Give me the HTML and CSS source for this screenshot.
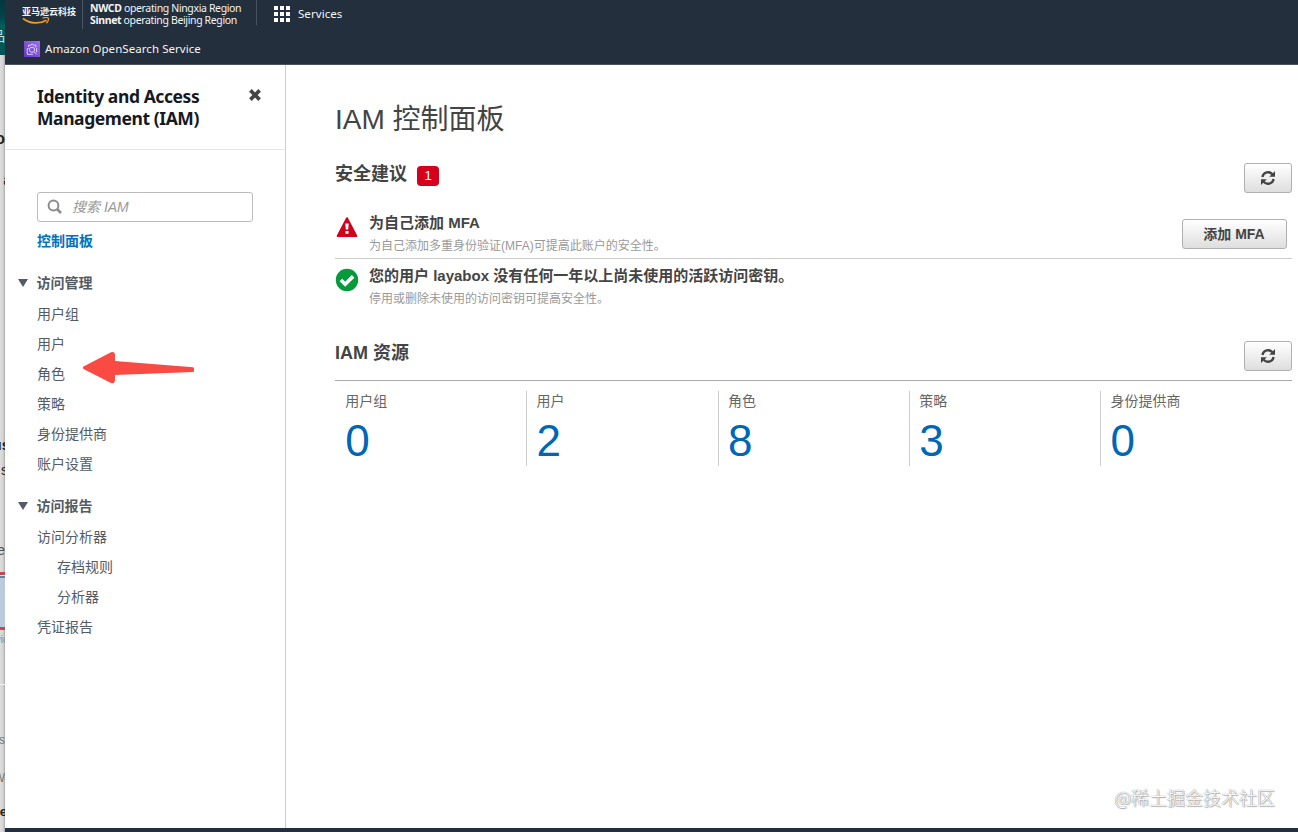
FILE: index.html
```html
<!DOCTYPE html>
<html lang="zh-CN">
<head>
<meta charset="utf-8">
<title>IAM 控制面板</title>
<link rel="stylesheet" href="styles.css">
</head>
<body>
<div class="desktop">
  <aside class="behind" aria-hidden="true">
    <span class="behind-top"></span>
    <span class="frag frag-brand">品</span>
    <span class="frag frag-o">o</span>
    <span class="frag frag-a">a</span>
    <span class="frag frag-us">us</span>
    <span class="frag frag-s">s</span>
    <span class="frag frag-e">e</span>
    <span class="behind-field"></span>
    <span class="frag frag-vic">vic</span>
    <span class="behind-line"></span>
    <span class="frag frag-s2">s</span>
    <span class="frag frag-w">W</span>
    <span class="frag frag-e2">e</span>
  </aside>
  <div class="window">
    <header class="topbar">
      <div class="topbar-row">
        <div class="brand">
          <span class="brand-name">亚马逊云科技</span>
          <svg class="smile" width="28" height="8" viewBox="0 0 28 8"><path d="M1 1.5C8 6.8 17 7.4 24.5 3.2" fill="none" stroke="#f29a1f" stroke-width="1.8"/><path d="M20.5 1.2C23 .4 25.6.4 26.2 1.2C26.8 2.1 26 4.5 24.4 6.2" fill="none" stroke="#f29a1f" stroke-width="1.3"/></svg>
        </div>
        <div class="regions"><div class="region-line nwcd"><b>NWCD</b> operating Ningxia Region</div><div class="region-line sinnet"><b>Sinnet</b> operating Beijing Region</div></div>
        <div class="services">
          <svg width="16" height="16" viewBox="0 0 16 16" fill="#fff"><path d="M0 0h4v4H0zM6 0h4v4H6zM12 0h4v4h-4zM0 6h4v4H0zM6 6h4v4H6zM12 6h4v4h-4zM0 12h4v4H0zM6 12h4v4H6zM12 12h4v4h-4z"/></svg>
          <span class="services-label">Services</span>
        </div>
      </div>
      <div class="favorites">
        <svg width="16" height="16" viewBox="0 0 16 16"><defs><linearGradient id="purple" x1="0" y1="1" x2="1" y2="0"><stop offset="0" stop-color="#6338c4"/><stop offset="1" stop-color="#a06ef2"/></linearGradient></defs><path fill="url(#purple)" d="M0 0h16v16H0z"/><g fill="none" stroke="#eadfff" stroke-width=".9"><path d="M3.2 13V7.5h1.3M4.5 6V4.2h2.2M6.4 4.2a1.8 1.3 0 0 1 3.4 0M9.5 4.2h2.3v2.2M12.6 7.2v4.1M3 13.3h6"/><circle cx="8" cy="8.7" r="2.6"/><path d="m9.9 10.6 2.5 2.6"/></g></svg>
        <span class="favorite-label">Amazon OpenSearch Service</span>
      </div>
    </header>
    <div class="body">
      <nav class="sidebar">
        <div class="side-head">
          <h2 class="side-title">Identity and Access<br>Management (IAM)</h2>
          <svg class="close" width="14" height="14" viewBox="0 0 14 14"><path d="m2.400 2.400 9.200 9.200m0-9.200-9.200 9.200" stroke="#444" stroke-width="3.700"/></svg>
        </div>
        <div class="search">
          <svg width="16" height="16" viewBox="0 0 16 16"><circle cx="6.500" cy="6.500" r="4.900" fill="none" stroke="#8c8c8c" stroke-width="2"/><path d="m10 10 4 4" stroke="#8c8c8c" stroke-width="2.500"/></svg>
          <span class="placeholder">搜索 IAM</span>
        </div>
        <a class="current">控制面板</a>
        <section class="group">
          <div class="group-title"><i class="caret"></i><span class="group-name">访问管理</span></div>
          <a class="item">用户组</a>
          <a class="item">用户</a>
          <a class="item">角色</a>
          <a class="item">策略</a>
          <a class="item">身份提供商</a>
          <a class="item">账户设置</a>
        </section>
        <section class="group">
          <div class="group-title"><i class="caret"></i><span class="group-name">访问报告</span></div>
          <a class="item">访问分析器</a>
          <a class="item sub">存档规则</a>
          <a class="item sub">分析器</a>
          <a class="item">凭证报告</a>
        </section>
      </nav>
      <main class="main">
        <h1 class="page-title">IAM 控制面板</h1>
        <div class="section-head security">
          <h2 class="section-title">安全建议</h2><span class="count">1</span>
          <button class="btn refresh"><svg width="16" height="16" viewBox="0 0 16 16"><g fill="none" stroke="#444" stroke-width="2.3"><path d="M2.4 7A5.7 5.7 0 0 1 12.6 4.6"/><path d="M13.6 9A5.7 5.7 0 0 1 3.4 11.4"/></g><path d="M15 1v5.8H9.2zM1 15V9.2h5.8z" fill="#444"/></svg></button>
        </div>
        <div class="advice first">
          <svg class="advice-icon" width="24" height="24" viewBox="0 0 24 24"><path d="M12 3.2 21.3 21H2.7z" fill="#d5001c" stroke="#d5001c" stroke-width="2" stroke-linejoin="round"/><path d="M10.3 8.500h3.400l-.5 6h-2.400zM10.500 16h3v2.800h-3z" fill="#fff"/></svg>
          <div class="advice-text"><div class="advice-title">为自己添加 MFA</div><div class="advice-desc">为自己添加多重身份验证(MFA)可提高此账户的安全性。</div></div>
          <button class="btn add">添加 MFA</button>
        </div>
        <div class="advice">
          <svg class="advice-icon" width="24" height="24" viewBox="0 0 24 24"><circle cx="12" cy="12" r="11.2" fill="#069a3c"/><path d="m5.900 12 4.300 4.200 7.900-7.800" fill="none" stroke="#fff" stroke-width="3.600"/></svg>
          <div class="advice-text"><div class="advice-title">您的用户 layabox 没有任何一年以上尚未使用的活跃访问密钥。</div><div class="advice-desc">停用或删除未使用的访问密钥可提高安全性。</div></div>
        </div>
        <div class="section-head resources">
          <h2 class="section-title">IAM 资源</h2>
          <button class="btn refresh"><svg width="16" height="16" viewBox="0 0 16 16"><g fill="none" stroke="#444" stroke-width="2.3"><path d="M2.4 7A5.7 5.7 0 0 1 12.6 4.6"/><path d="M13.6 9A5.7 5.7 0 0 1 3.4 11.4"/></g><path d="M15 1v5.8H9.2zM1 15V9.2h5.8z" fill="#444"/></svg></button>
        </div>
        <div class="stats">
          <div class="stat"><div class="stat-label">用户组</div><div class="stat-value">0</div></div>
          <div class="stat"><div class="stat-label">用户</div><div class="stat-value">2</div></div>
          <div class="stat"><div class="stat-label">角色</div><div class="stat-value">8</div></div>
          <div class="stat"><div class="stat-label">策略</div><div class="stat-value">3</div></div>
          <div class="stat"><div class="stat-label">身份提供商</div><div class="stat-value">0</div></div>
        </div>
      </main>
    </div>
    <footer class="bottombar"></footer>
  </div>
  <svg class="arrow" width="114" height="34" viewBox="0 0 114 34"><path d="M1.5 15.5 29 1.2Q33 0 33 3.5V10L111 16.300Q112 16.500 112 17.500v2.500q0 1-1 1L33 24v5.500Q32.500 33 29 32L1.500 18Q0 16.700 1.500 15.500z" fill="#f94b43"/></svg>
  <span class="watermark">@稀土掘金技术社区</span>
</div>
</body>
</html>
```
FILE: styles.css
```css
* { box-sizing: border-box; }
body {
  margin: 0;
  font-family: "Liberation Sans", "Noto Sans CJK SC", sans-serif;
  color: #444;
}
h1, h2 { margin: 0; }
.desktop {
  position: relative;
  display: flex;
  width: 1298px;
  height: 832px;
  overflow: hidden;
}

/* sliver of the window underneath */
.behind {
  position: relative;
  width: 5px;
  height: 832px;
  overflow: hidden;
  background: linear-gradient(90deg, #dedede 0, #d4d4d4 3px, #a8a8a8 5px);
}
.behind-top {
  position: absolute;
  inset: 0 0 auto;
  height: 55px;
  background: linear-gradient(#04363d 0, #04454a 18px, #00605c 26px, #005653 100%);
}
.behind-field {
  position: absolute;
  top: 572px;
  left: 0;
  width: 5px;
  height: 58px;
  border: solid #c9474a;
  border-width: 3px 0;
  background: linear-gradient(#f1f1f1 1px, #5e86a4 1px 3px, #b9cbdc 3px 52px, #5e86a4 52px);
}
.behind-line {
  position: absolute;
  top: 684px;
  width: 5px;
  height: 1px;
  background: #f2f2f2;
}
.frag { position: absolute; right: 0; line-height: 16px; font-size: 14px; white-space: nowrap; color: #222; }
.frag-brand { top: 28px; color: #c8dedd; }
.frag-o { top: 131px; font-size: 16px; font-weight: bold; }
.frag-a { top: 172px; right: -6px; }
.frag-us { top: 437px; font-size: 15px; font-weight: bold; right: -5px; }
.frag-s { top: 462px; right: -3px; }
.frag-e { top: 542px; font-size: 15px; color: #555; }
.frag-vic { top: 632px; font-size: 10px; right: -3px; color: #888; }
.frag-s2 { top: 732px; font-size: 12px; color: #777; }
.frag-w { top: 770px; font-size: 12px; color: #777; }
.frag-e2 { top: 804px; font-size: 13px; font-weight: bold; right: -2px; }

.window {
  display: flex;
  flex: 1;
  flex-direction: column;
  background: #fff;
}
.topbar {
  height: 65px;
  background: #232f3c;
  color: #f3f5f7;
  font-family: "Noto Sans", "Noto Sans CJK SC", sans-serif;
  border-bottom: 1px solid #4a5461;
}
.topbar-row {
  display: flex;
  align-items: flex-start;
  height: 32px;
  padding-left: 17px;
}
.brand {
  display: flex;
  flex-direction: column;
  width: 61px;
  height: 29px;
  padding-top: 6px;
  border-right: 1px solid #4b5664;
}
.brand-name { font-size: 9px; line-height: 11px; font-weight: bold; white-space: nowrap; }
.regions {
  width: 174px;
  height: 25px;
  margin-right: 17px;
  padding: 2px 0 0 7px;
  border-right: 1px solid #465260;
  white-space: nowrap;
}
.region-line { font-size: 10.500px; line-height: 12px; letter-spacing: -0.36px; }
.services {
  display: flex;
  align-items: center;
  gap: 8px;
  height: 28px;
}
.services-label, .favorite-label { font-size: 11.500px; line-height: 16px; letter-spacing: 0.06px; white-space: nowrap; }
.favorites {
  display: flex;
  align-items: center;
  gap: 5px;
  height: 33px;
  padding-left: 19px;
}
.body {
  display: flex;
  height: 763px;
}
.sidebar {
  width: 281px;
  border-right: 1px solid #ccc;
  color: #545b64;
}
.side-head {
  display: flex;
  justify-content: space-between;
  height: 85px;
  padding: 20px 23px 0 32px;
  border-bottom: 1px solid #e6e6e6;
}
.side-title {
  color: #16191f;
  font-family: "Noto Sans", sans-serif;
  font-size: 17.500px;
  line-height: 22px;
  font-weight: bold;
  letter-spacing: -0.42px;
  white-space: nowrap;
}
.close { margin-top: 3px; }
.search {
  display: flex;
  align-items: center;
  gap: 9px;
  width: 216px;
  height: 30px;
  margin: 42px 0 0 32px;
  padding-left: 9px;
  border: 1px solid #bbb;
  border-radius: 3px;
}
.placeholder { color: #999; font-size: 14px; font-style: italic; line-height: 20px; }
.current {
  display: block;
  margin: 9px 0 0 32px;
  color: #0073bb;
  font-size: 14px;
  font-weight: bold;
  line-height: 20px;
}
.group { margin-top: 17px; }
.group + .group { margin-top: 12px; }
.group-title {
  display: flex;
  align-items: center;
  gap: 9px;
  height: 30px;
  margin-bottom: 1px;
  padding-left: 13px;
  font-size: 14px;
  font-weight: bold;
}
.group-name { margin: 0 0 2px -0.5px; }
.caret {
  width: 10px;
  height: 8px;
  background: #545b64;
  clip-path: polygon(0 0, 100% 0, 50% 100%);
}
.item { display: block; height: 30px; padding-left: 32px; font-size: 14px; line-height: 30px; }
.sub { padding-left: 52px; }

.main { flex: 1; padding: 34px 6px 0 49px; }
.page-title { height: 64px; font-size: 28px; line-height: 42px; font-weight: normal; }
.section-head { display: flex; }
.security { height: 50px; }
.section-title { font-size: 18px; line-height: 24px; font-weight: bold; }
.security .section-title { margin-top: -1px; }
.count {
  width: 22px;
  height: 20px;
  margin: 3px 0 0 10px;
  border-radius: 4px;
  background: #d5001c;
  color: #fff;
  font-size: 13px;
  line-height: 20px;
  text-align: center;
}
.btn {
  height: 30px;
  padding: 0;
  border: 1px solid #b0b0b0;
  border-radius: 3px;
  background: linear-gradient(#fff, #dedede);
  color: #444;
  font: bold 14px "Liberation Sans", "Noto Sans CJK SC", sans-serif;
}
.refresh {
  display: flex;
  align-items: center;
  justify-content: center;
  width: 48px;
  margin-left: auto;
}
.add { width: 105px; margin: 6px 5px 0 auto; padding: 0 1px 2px 0; }
.advice { display: flex; height: 53px; }
.first { height: 46px; border-bottom: 1px solid #ccc; }
.advice-icon { flex: none; margin-top: 9px; }
.first .advice-icon { margin-top: 2px; }
.advice-text { margin: 6px 0 0 10px; }
.first .advice-text { margin-top: -1px; }
.advice-title { font-size: 15px; line-height: 22px; font-weight: bold; white-space: nowrap; }
.advice-desc { margin-top: 1px; color: #999; font-size: 12px; line-height: 22px; white-space: nowrap; }
.resources { height: 40px; margin-top: 29px; border-bottom: 1px solid #aaa; }
.stats { display: grid; grid-template-columns: repeat(5, 191.3px); margin-top: 10px; }
.stat { height: 75px; padding-left: 9.300px; border-left: 1px solid #ccc; }
.stat:first-child { border-left-color: transparent; }
.stat-label { color: #666; font-size: 14px; line-height: 20px; }
.stat-value { color: #0067b5; font-size: 44px; line-height: 50px; margin-top: 5px; }
.bottombar { height: 4px; background: #232f3c; }

.arrow { position: absolute; left: 82px; top: 351px; }
.watermark {
  position: absolute;
  right: 23px;
  bottom: 23px;
  color: #fff;
  font-family: "Noto Sans CJK SC", sans-serif;
  font-size: 18px;
  font-weight: 300;
  line-height: 24px;
  white-space: nowrap;
  text-shadow: 0 0 1px #999, 0 0 1px #999, 1px 1px 1px #aaa;
}
```
